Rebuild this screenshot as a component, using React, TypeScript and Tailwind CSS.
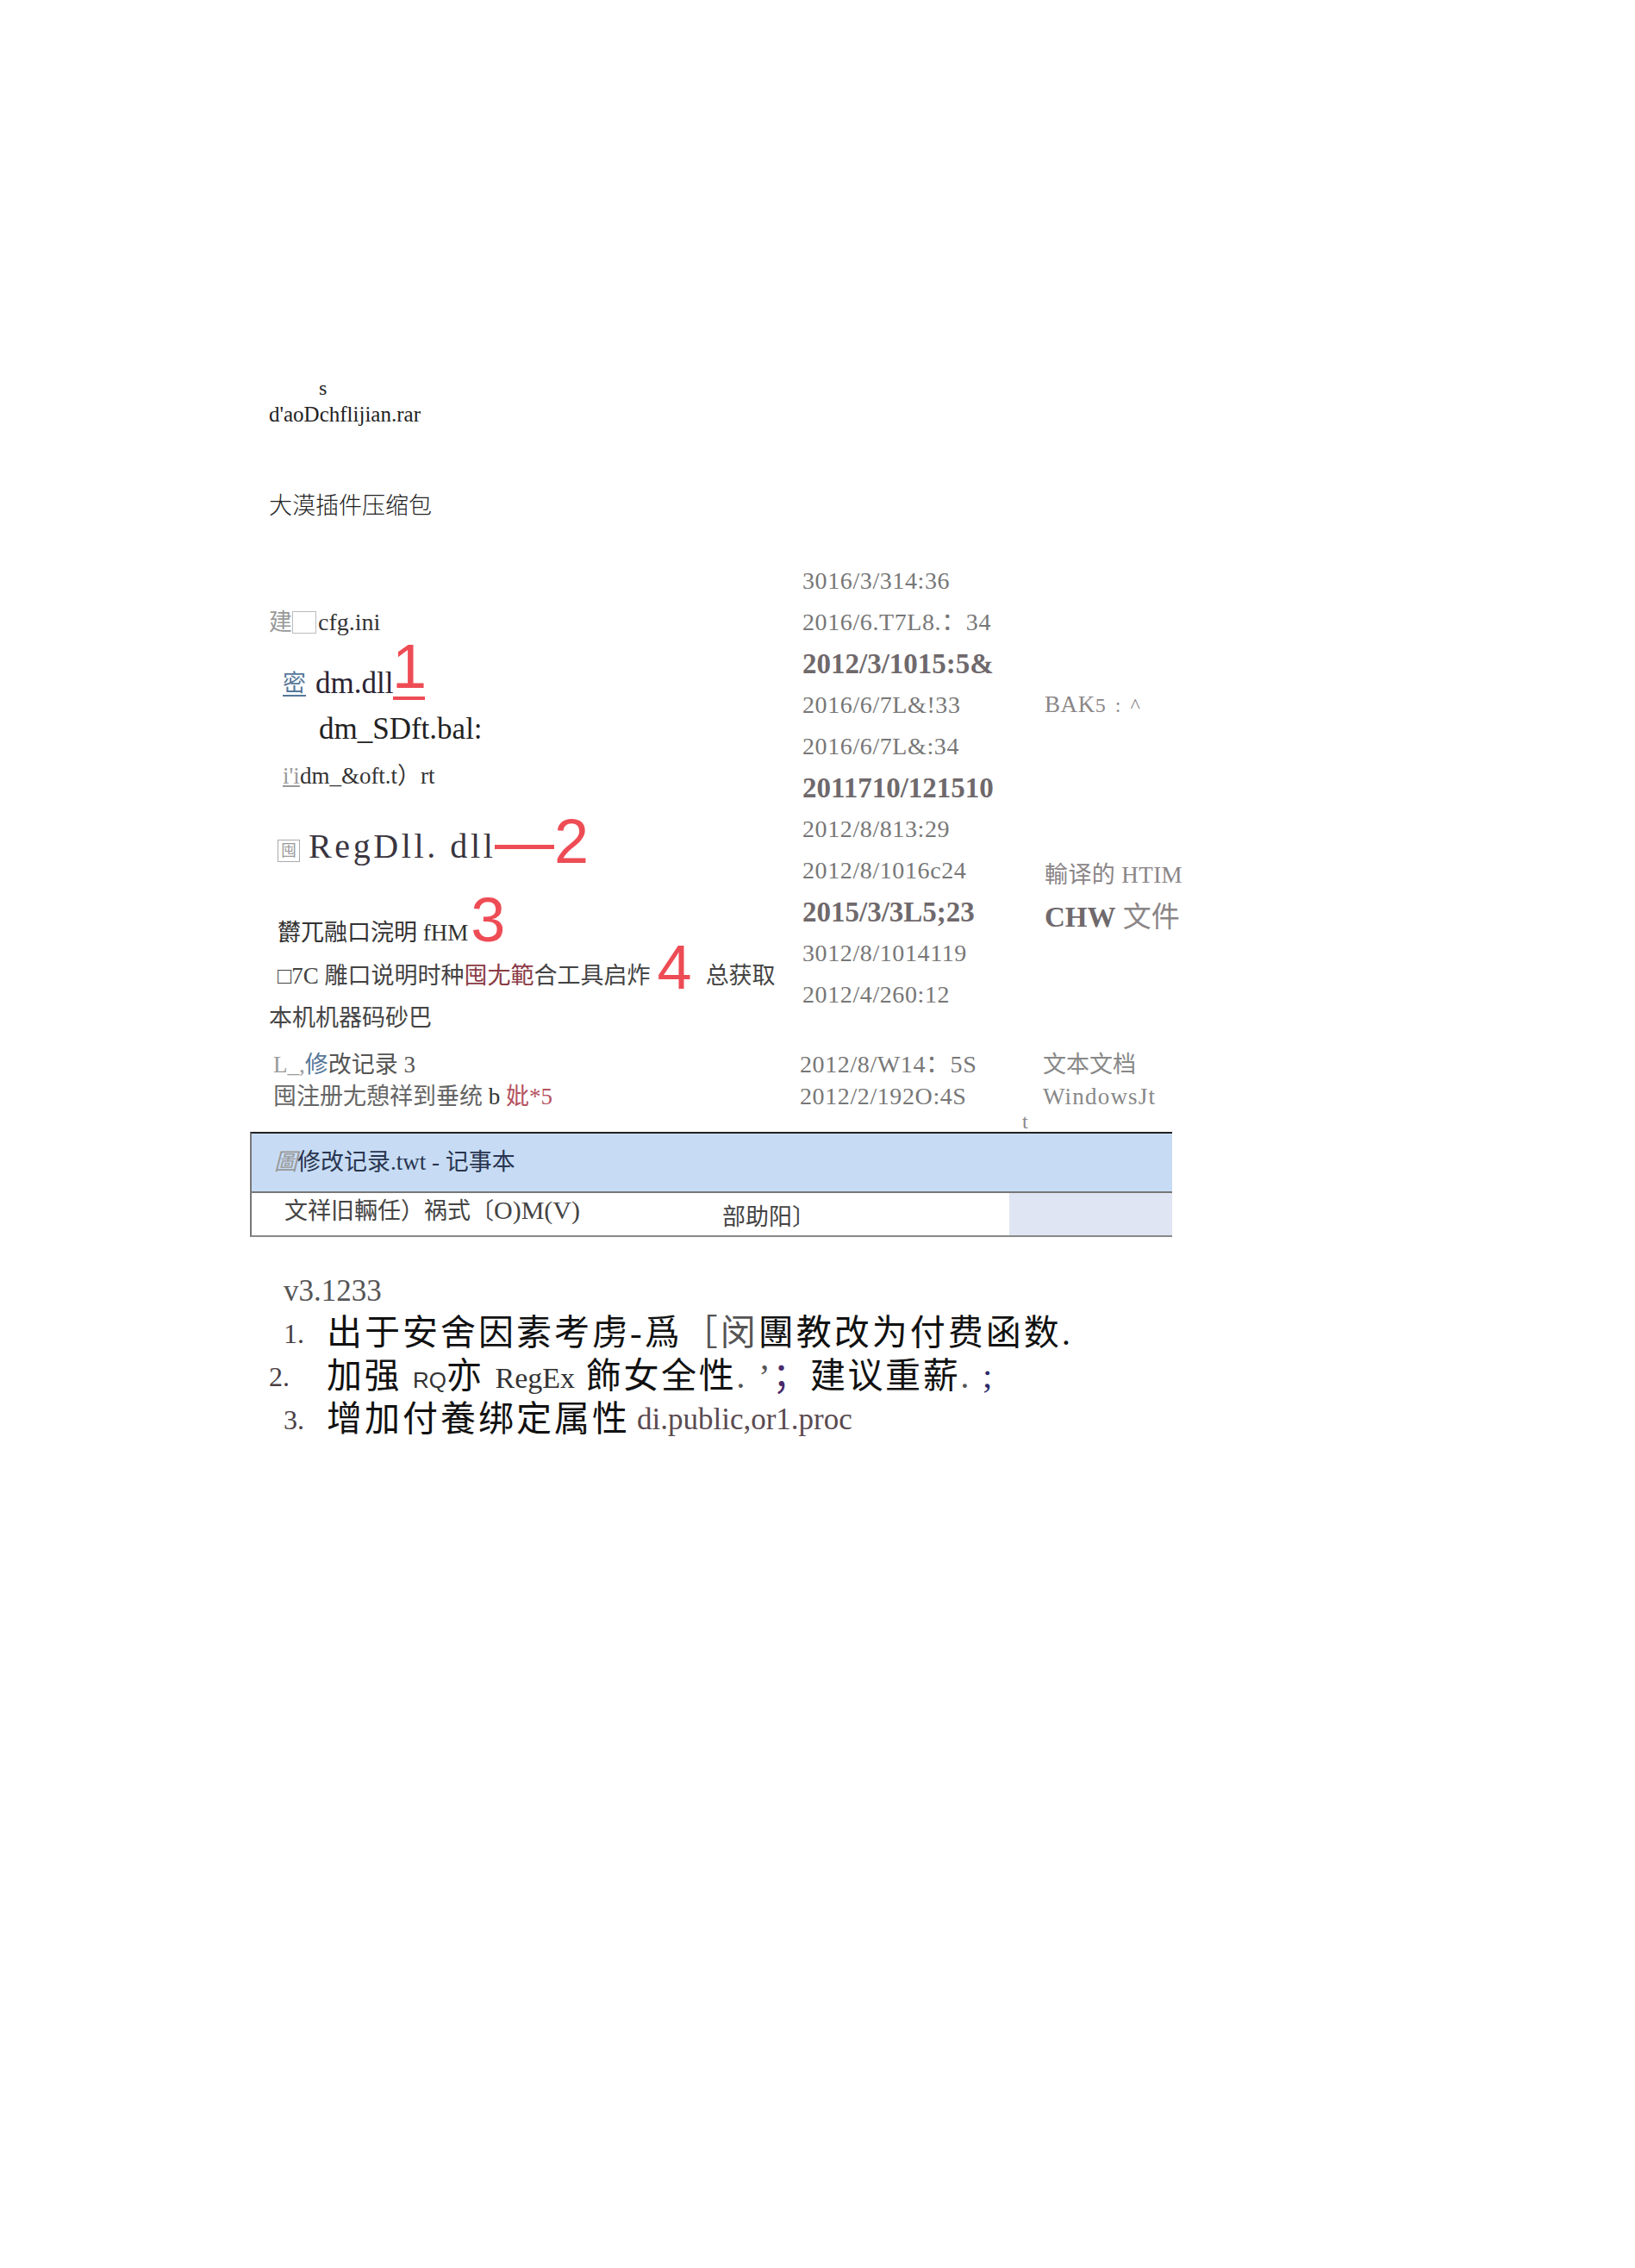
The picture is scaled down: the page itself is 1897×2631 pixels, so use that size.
const dates = [
  { text: "3016/3/314:36", bold: false },
  { text: "2016/6.T7L8.：34", bold: false },
  { text: "2012/3/1015:5&", bold: true },
  { text: "2016/6/7L&!33", bold: false },
  { text: "2016/6/7L&:34", bold: false },
  { text: "2011710/121510", bold: true },
  { text: "2012/8/813:29", bold: false },
  { text: "2012/8/1016c24", bold: false },
  { text: "2015/3/3L5;23", bold: true },
  { text: "3012/8/1014119", bold: false },
  { text: "2012/4/260:12", bold: false },
];

function Num({ children }: { children: React.ReactNode }) {
  return <span className="font-['Liberation_Sans'] text-[#ee4c55] text-[72px] leading-none">{children}</span>;
}

export default function App() {
  return (
    <div className="w-[1897px] h-[2631px] bg-white text-[#222] font-['Liberation_Serif','Noto_Sans_CJK_SC',serif] overflow-hidden">
      {/* archive heading */}
      <div className="pl-[312px] pt-[436px] h-[648px]">
        <p className="pl-[58px] text-[24px] leading-[28px]">s</p>
        <p className="text-[25px] leading-[30px] mt-[2px]">d'aoDchflijian.rar</p>
        <p className="mt-[73px] text-[27px] leading-[36px] font-light">大漠插件压缩包</p>
      </div>

      {/* file listing */}
      <div className="flex h-[665px]">
        <div className="w-[931px] pl-[312px] shrink-0">
          <div className="mt-[54px] h-[40px] flex items-center text-[28px] text-[#333]">
            <span className="text-[#999] text-[27px]">建</span>
            <span className="w-[28px] h-[26px] border border-[#bbb] mr-[2px]" />
            <span>cfg.ini</span>
          </div>
          <div className="mt-[31px] h-[40px] flex items-center pl-[16px] text-[35px] text-[#2b2433]">
            <span className="text-[27px] text-[#56789a] underline underline-offset-4 mr-[11px]">密</span>
            <span>dm.dll</span>
            <span className="relative border-b-[4px] border-[#ee4c55] w-[37px] h-[56px] -mt-[18px] flex justify-center items-end">
              <span className="-mb-[5px]"><Num>1</Num></span>
            </span>
          </div>
          <p className="mt-[13px] h-[40px] pl-[58px] text-[35px] leading-[40px]">dm_SDft.bal:</p>
          <p className="mt-[14px] h-[40px] pl-[16px] text-[27px] leading-[40px] text-[#333]">
            <span className="text-[#999] underline">i'i</span>dm_&oft.t）rt
          </p>
          <div className="mt-[42px] h-[40px] flex items-center pl-[10px] whitespace-nowrap">
            <span className="w-[26px] h-[26px] border border-[#aaa] text-[#999] text-[18px] leading-[24px] text-center mt-[10px]">囤</span>
            <span className="ml-[10px] w-[216px] text-[40px] tracking-[3.6px] text-[#3a3540]">RegDll. dll</span>
            <span className="w-[69px] h-[5px] bg-[#ee4c55]" />
            <span className="-mt-[12px]"><Num>2</Num></span>
          </div>
          <div className="mt-[60px] h-[40px] flex items-center pl-[10px] text-[27px] text-[#333]">
            <span className="mr-[3px]">欝兀融口浣明 fHM</span>
            <span className="-mt-[30px]"><Num>3</Num></span>
          </div>
          <div className="mt-[10px] h-[40px] flex items-center pl-[10px] text-[27px] text-[#444] whitespace-nowrap">
            <span>□7C 雕口说明时种</span>
            <span className="text-[#8a3b45]">囤尢範</span>
            <span>合工具启炸</span>
            <span className="ml-[8px] -mt-[20px]"><Num>4</Num></span>
            <span className="ml-[16px]">总获取</span>
          </div>
          <p className="mt-[9px] h-[40px] text-[27px] leading-[40px] text-[#444]">本机机器码砂巴</p>
          <p className="mt-[16px] h-[36px] pl-[5px] text-[27px] leading-[36px] text-[#555]">
            <span className="text-[#999]">L_,</span><span className="text-[#56789a]">修</span>改记录 3
          </p>
          <p className="mt-[1px] h-[36px] pl-[5px] text-[27px] leading-[36px] text-[#666] whitespace-nowrap">
            囤注册尢憩祥到垂统 <span className="text-[#333]">b</span> <span className="text-[#b5535f]">妣*5</span>
          </p>
        </div>

        <div className="w-[281px] shrink-0 pt-[2px]">
          {dates.map((d) => (
            <p
              key={d.text}
              className={d.bold ? "h-[48px] leading-[48px] text-[33px] font-bold text-[#6f696c]" : "h-[48px] leading-[48px] text-[28px] tracking-[0.6px] text-[#777]"}
            >
              {d.text}
            </p>
          ))}
          <div className="mt-[38px] -ml-[3px] text-[28px] tracking-[0.6px] text-[#777]">
            <p className="h-[37px] leading-[37px]">2012/8/W14：5S</p>
            <p className="h-[37px] leading-[37px]">2012/2/192O:4S</p>
          </div>
        </div>

        <div className="pt-[145px] text-[#8a8587] whitespace-nowrap">
          <p className="h-[48px] leading-[48px] text-[27px] tracking-[0.6px]">BAK<span className="text-[24px] tracking-[2.5px]">5 : ^</span></p>
          <p className="mt-[150px] h-[48px] leading-[48px] text-[27px] tracking-[0.4px]">輸译的 HTIM</p>
          <p className="mt-[1px] h-[48px] leading-[48px] text-[33px]"><b className="text-[#6f696c]">CHW</b> 文件</p>
          <div className="mt-[129px] -ml-[2px] text-[#888]">
            <p className="h-[37px] leading-[37px] text-[27px]">文本文档</p>
            <p className="h-[37px] leading-[37px] text-[27px] tracking-[1.2px]">WindowsJt</p>
            <p className="-ml-[24px] -mt-[5px] h-[30px] leading-[30px] text-[24px]">t</p>
          </div>
        </div>
      </div>

      {/* notepad window */}
      <div className="ml-[290px] w-[1070px] h-[122px] border-t-2 border-l-2 border-b-2 border-t-[#222] border-l-[#777] border-b-[#888]">
        <div className="h-[69px] bg-[#c7dcf4] border-b-2 border-[#777] flex items-center pl-[26px] text-[27px] text-[#2a3550]">
          <span className="italic text-[#999]">圖</span>修改记录.twt - 记事本
        </div>
        <div className="flex h-[49px]">
          <p className="w-[879px] flex text-[27px] text-[#444] whitespace-nowrap">
            <span className="pl-[38px] w-[546px] -mt-[3px]">文祥旧輛任）祸式〔<span className="text-[30px]">O)M(V)</span></span>
            <span className="pt-[8px]">部助阳〕</span>
          </p>
          <div className="flex-1 bg-[#e0e5f3]" />
        </div>
      </div>

      {/* change notes */}
      <div className="pt-[45px] text-[#111] whitespace-nowrap">
        <p className="pl-[329px] h-[36px] leading-[36px] text-[35px] text-[#555]">v3.1233</p>
        <div className="mt-[6px] flex h-[50px] items-center pl-[329px]">
          <span className="w-[50px] text-[32px] text-[#4a3f45]">1.</span>
          <span className="text-[41px] tracking-[3px]">出于安舍因素考虏-爲<span className="text-[#555]">［闵</span>團教改为付费函数.</span>
        </div>
        <div className="flex h-[50px] items-center pl-[312px]">
          <span className="w-[67px] text-[32px] text-[#4a3f45]">2.</span>
          <span className="text-[41px] tracking-[2.6px]">加强 <span className="font-['Liberation_Sans'] text-[26px] tracking-normal text-[#333]">RQ</span>亦 <span className="text-[34px] tracking-normal text-[#333]">RegEx</span> 飾女全性<span className="text-[#555]">.</span> <span className="text-[#555]">’</span><span className="text-[#4a2a6a]">；</span>建议重薪<span className="text-[#555]">.</span> <span className="text-[#2a2a6a]">;</span></span>
        </div>
        <div className="flex h-[50px] items-center pl-[329px]">
          <span className="w-[50px] text-[32px] text-[#4a3f45]">3.</span>
          <span className="text-[41px] tracking-[3px]">增加付養绑定属性</span>
          <span className="ml-[8px] text-[35px] text-[#5a4a50]">di.public,or1.proc</span>
        </div>
      </div>
    </div>
  );
}
